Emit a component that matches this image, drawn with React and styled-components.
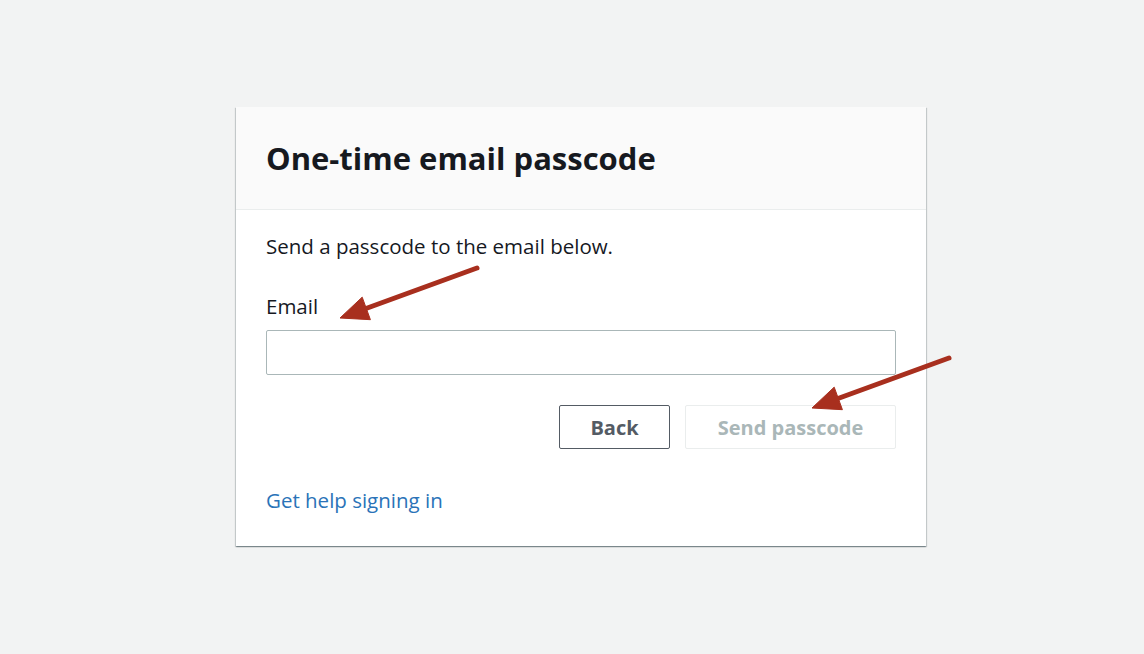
import React from 'react';
import styled, { createGlobalStyle } from 'styled-components';

const GlobalStyle = createGlobalStyle`
  html, body {
    margin: 0;
    padding: 0;
    background: #f2f3f3;
    font-family: "Open Sans", "Noto Sans", Arial, sans-serif;
  }
`;

const Page = styled.div`
  position: relative;
  width: 1144px;
  height: 654px;
  display: flex;
  justify-content: center;
  padding-top: 107px;
  box-sizing: border-box;
`;

const Card = styled.div`
  width: 690px;
  height: 439px;
  background: #fff;
  box-shadow: 0 1px 1px 0 rgba(0, 28, 36, 0.3), 1px 1px 1px 0 rgba(0, 28, 36, 0.15), -1px 1px 1px 0 rgba(0, 28, 36, 0.15);
  display: flex;
  flex-direction: column;
  margin-left: 18px;
`;

const Header = styled.div`
  height: 103px;
  background: #fafafa;
  border-bottom: 1px solid #eaeded;
  display: flex;
  align-items: center;
  padding: 0 30px;
  box-sizing: border-box;
`;

const Title = styled.h1`
  margin: 0;
  font-size: 31px;
  font-weight: 700;
  color: #16191f;
`;

const Body = styled.div`
  padding: 21px 30px 0;
  display: flex;
  flex-direction: column;
`;

const Text = styled.p`
  margin: 0;
  font-size: 20.5px;
  line-height: 30px;
  color: #16191f;
`;

const Label = styled.label`
  margin-top: 30px;
  font-size: 20.5px;
  line-height: 30px;
  color: #16191f;
`;

const Input = styled.input`
  margin-top: 9px;
  height: 45px;
  box-sizing: border-box;
  border: 1px solid #aab7b8;
  border-radius: 2px;
  outline: none;
  font-size: 18px;
  padding: 0 12px;
`;

const Actions = styled.div`
  margin-top: 30px;
  display: flex;
  justify-content: flex-end;
  gap: 15px;
`;

const Button = styled.button`
  height: 44px;
  width: ${p => p.$w}px;
  box-sizing: border-box;
  border-radius: 2px;
  background: #fff;
  font-family: inherit;
  font-size: 20px;
  font-weight: 700;
  border: 1px solid ${p => (p.$disabled ? '#eaeded' : '#545b64')};
  color: ${p => (p.$disabled ? '#aab7b8' : '#545b64')};
`;

const Link = styled.a`
  margin-top: 36px;
  font-size: 20.5px;
  line-height: 30px;
  color: #2a73b8;
  text-decoration: none;
`;

const Arrows = styled.svg`
  position: absolute;
  left: 0;
  top: 0;
  pointer-events: none;
`;

const Arrow = ({ x1, y1, x2, y2 }) => {
  const dx = x2 - x1;
  const dy = y2 - y1;
  const len = Math.hypot(dx, dy);
  const ux = dx / len;
  const uy = dy / len;
  const hl = 28;
  const hw = 12;
  const bx = x2 - ux * hl;
  const by = y2 - uy * hl;
  const pts = `${x2},${y2} ${bx - uy * hw},${by + ux * hw} ${bx + uy * hw},${by - ux * hw}`;
  return (
    <g fill="#a82f1e" stroke="#a82f1e">
      <line x1={x1} y1={y1} x2={bx + ux * 4} y2={by + uy * 4} strokeWidth="5" strokeLinecap="round" />
      <polygon points={pts} strokeWidth="1" strokeLinejoin="round" />
    </g>
  );
};

export default function App() {
  return (
    <>
      <GlobalStyle />
      <Page>
        <Card>
          <Header>
            <Title>One-time email passcode</Title>
          </Header>
          <Body>
            <Text>Send a passcode to the email below.</Text>
            <Label htmlFor="email">Email</Label>
            <Input id="email" type="email" />
            <Actions>
              <Button $w={111}>Back</Button>
              <Button $w={211} $disabled>Send passcode</Button>
            </Actions>
            <Link href="#">Get help signing in</Link>
          </Body>
        </Card>
        <Arrows width="1144" height="654">
          <Arrow x1={477} y1={268} x2={340} y2={318} />
          <Arrow x1={949} y1={358} x2={812} y2={408} />
        </Arrows>
      </Page>
    </>
  );
}
